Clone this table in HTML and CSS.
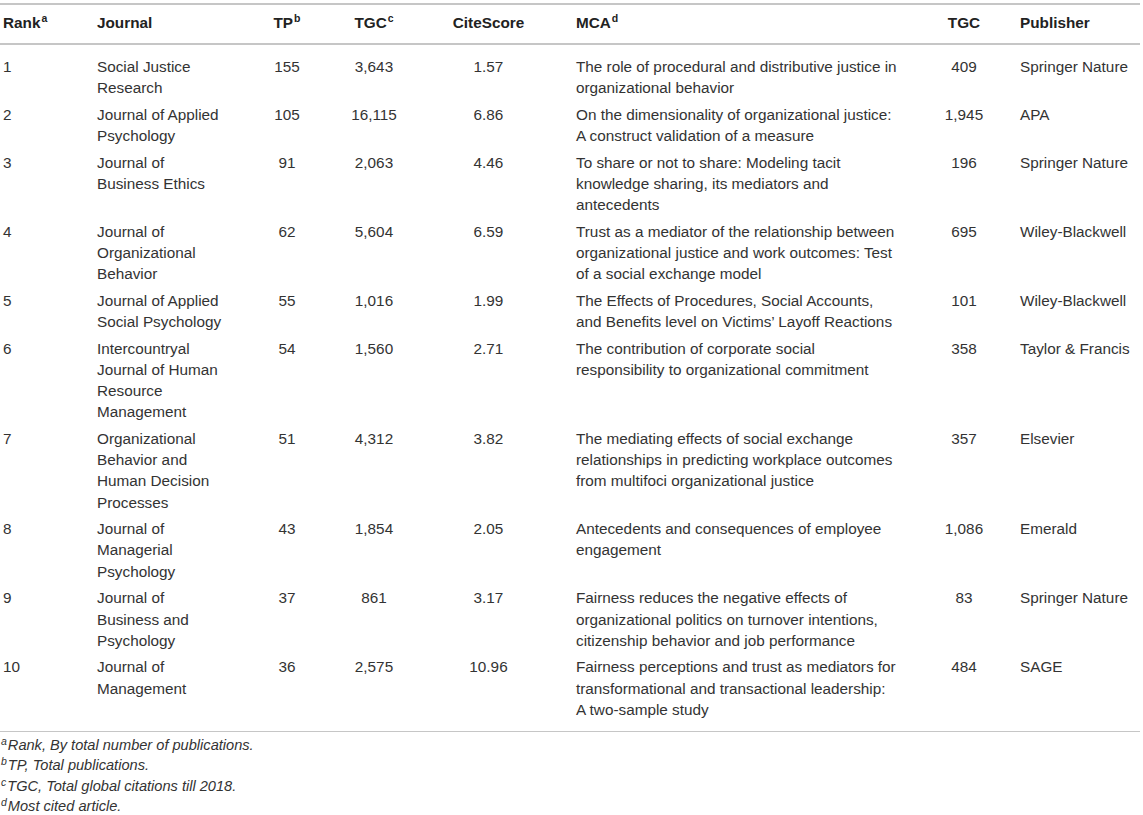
FILE: index.html
```html
<!DOCTYPE html>
<html lang="en">
<head>
<meta charset="utf-8">
<title>Top journals</title>
<link rel="stylesheet" href="styles.css">
</head>
<body>
<div class="wrap">
<table class="tbl">
  <colgroup>
    <col class="c-rank"><col class="c-journal"><col class="c-tp"><col class="c-tgc"><col class="c-cite"><col class="c-mca"><col class="c-tgc2"><col class="c-pub">
  </colgroup>
  <thead>
    <tr>
      <th class="l">Rank<sup>a</sup></th>
      <th class="l">Journal</th>
      <th class="c">TP<sup>b</sup></th>
      <th class="c">TGC<sup>c</sup></th>
      <th class="c cite">CiteScore</th>
      <th class="l">MCA<sup>d</sup></th>
      <th class="c tgc2">TGC</th>
      <th class="l">Publisher</th>
    </tr>
  </thead>
  <tbody>
    <tr>
      <td class="l">1</td><td class="l">Social Justice<br>Research</td><td class="c">155</td><td class="c">3,643</td><td class="c cite">1.57</td>
      <td class="l">The role of procedural and distributive justice in<br>organizational behavior</td><td class="c tgc2">409</td><td class="l">Springer Nature</td>
    </tr>
    <tr>
      <td class="l">2</td><td class="l">Journal of Applied<br>Psychology</td><td class="c">105</td><td class="c">16,115</td><td class="c cite">6.86</td>
      <td class="l">On the dimensionality of organizational justice:<br>A construct validation of a measure</td><td class="c tgc2">1,945</td><td class="l">APA</td>
    </tr>
    <tr>
      <td class="l">3</td><td class="l">Journal of<br>Business Ethics</td><td class="c">91</td><td class="c">2,063</td><td class="c cite">4.46</td>
      <td class="l">To share or not to share: Modeling tacit<br>knowledge sharing, its mediators and<br>antecedents</td><td class="c tgc2">196</td><td class="l">Springer Nature</td>
    </tr>
    <tr>
      <td class="l">4</td><td class="l">Journal of<br>Organizational<br>Behavior</td><td class="c">62</td><td class="c">5,604</td><td class="c cite">6.59</td>
      <td class="l">Trust as a mediator of the relationship between<br>organizational justice and work outcomes: Test<br>of a social exchange model</td><td class="c tgc2">695</td><td class="l">Wiley-Blackwell</td>
    </tr>
    <tr>
      <td class="l">5</td><td class="l">Journal of Applied<br>Social Psychology</td><td class="c">55</td><td class="c">1,016</td><td class="c cite">1.99</td>
      <td class="l">The Effects of Procedures, Social Accounts,<br>and Benefits level on Victims’ Layoff Reactions</td><td class="c tgc2">101</td><td class="l">Wiley-Blackwell</td>
    </tr>
    <tr>
      <td class="l">6</td><td class="l">Intercountryal<br>Journal of Human<br>Resource<br>Management</td><td class="c">54</td><td class="c">1,560</td><td class="c cite">2.71</td>
      <td class="l">The contribution of corporate social<br>responsibility to organizational commitment</td><td class="c tgc2">358</td><td class="l">Taylor &amp; Francis</td>
    </tr>
    <tr>
      <td class="l">7</td><td class="l">Organizational<br>Behavior and<br>Human Decision<br>Processes</td><td class="c">51</td><td class="c">4,312</td><td class="c cite">3.82</td>
      <td class="l">The mediating effects of social exchange<br>relationships in predicting workplace outcomes<br>from multifoci organizational justice</td><td class="c tgc2">357</td><td class="l">Elsevier</td>
    </tr>
    <tr>
      <td class="l">8</td><td class="l">Journal of<br>Managerial<br>Psychology</td><td class="c">43</td><td class="c">1,854</td><td class="c cite">2.05</td>
      <td class="l">Antecedents and consequences of employee<br>engagement</td><td class="c tgc2">1,086</td><td class="l">Emerald</td>
    </tr>
    <tr>
      <td class="l">9</td><td class="l">Journal of<br>Business and<br>Psychology</td><td class="c">37</td><td class="c">861</td><td class="c cite">3.17</td>
      <td class="l">Fairness reduces the negative effects of<br>organizational politics on turnover intentions,<br>citizenship behavior and job performance</td><td class="c tgc2">83</td><td class="l">Springer Nature</td>
    </tr>
    <tr>
      <td class="l">10</td><td class="l">Journal of<br>Management</td><td class="c">36</td><td class="c">2,575</td><td class="c cite">10.96</td>
      <td class="l">Fairness perceptions and trust as mediators for<br>transformational and transactional leadership:<br>A two-sample study</td><td class="c tgc2">484</td><td class="l">SAGE</td>
    </tr>
  </tbody>
</table>
<div class="notes">
  <p><sup>a</sup>Rank, By total number of publications.</p>
  <p><sup>b</sup>TP, Total publications.</p>
  <p><sup>c</sup>TGC, Total global citations till 2018.</p>
  <p><sup>d</sup>Most cited article.</p>
</div>
</div>
</body>
</html>
```

FILE: styles.css
```css
html, body {
  margin: 0;
  padding: 0;
  background: #ffffff;
}

.wrap {
  width: 1140px;
  padding-top: 3px;
  font-family: "Liberation Sans", Arial, sans-serif;
  color: #333333;
}

.tbl {
  width: 1140px;
  table-layout: fixed;
  border-collapse: collapse;
  font-size: 15.3px;
  line-height: 21.2px;
}

.c-rank { width: 94px; }
.c-journal { width: 156px; }
.c-tp { width: 74px; }
.c-tgc { width: 100px; }
.c-cite { width: 149px; }
.c-mca { width: 355px; }
.c-tgc2 { width: 89px; }
.c-pub { width: 123px; }

.tbl thead tr {
  border-top: 2px solid #c6c6c6;
  border-bottom: 2px solid #c6c6c6;
}

.tbl th {
  font-weight: bold;
  color: #222222;
  padding: 7px 3px 10px 3px;
  vertical-align: top;
}

.tbl td {
  padding: 2.75px 3px;
  vertical-align: top;
  white-space: nowrap;
}

.tbl tbody tr:first-child td {
  padding-top: 10.5px;
}

.tbl tbody tr:last-child td {
  padding-bottom: 10.5px;
}

.tbl tbody tr:last-child {
  border-bottom: 1px solid #c6c6c6;
}

.l { text-align: left; }
.c { text-align: center; }

.tbl .cite { padding-right: 23px; }
.tbl .tgc2 { padding-right: 17px; padding-left: 0; }

.tbl sup {
  font-size: 10.5px;
  line-height: 0;
  vertical-align: 6px;
  margin-left: 1px;
}

.notes {
  padding-top: 3px;
  font-size: 14.6px;
  line-height: 20.6px;
  font-style: italic;
  color: #333333;
}

.notes p {
  margin: 0;
  padding-left: 1px;
}

.notes sup {
  font-size: 10.5px;
  line-height: 0;
  vertical-align: 5px;
  margin-right: 1px;
}
```
